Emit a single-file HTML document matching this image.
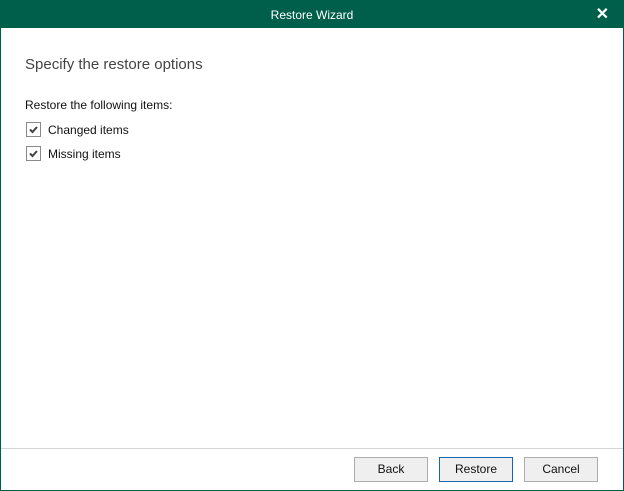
<html><head><style>
body{margin:0;width:624px;height:491px;overflow:hidden;font-family:"Liberation Sans",sans-serif;}
.win{position:absolute;left:0;top:0;width:622px;height:489px;border:1px solid #005f4b;background:#fff}
.tb{position:absolute;left:0;top:0;width:622px;height:27px;background:#005f4b;color:#fff;font-size:12px;text-align:center;line-height:28px}
.x{position:absolute;right:14px;top:0;font-size:16px;font-weight:bold}
.h{position:absolute;left:24px;top:55px;font-size:15px;color:#444}
.t{position:absolute;font-size:12px;color:#111}
.cb{position:absolute;left:25px;width:13px;height:13px;border:1px solid #8a8a8a;background:#fff}
.cb svg{position:absolute;left:1px;top:1px}
.sep{position:absolute;left:0;top:447px;width:622px;height:1px;background:#d4d4d4}
.b{position:absolute;top:456px;width:72px;height:23px;border:1px solid #adadad;background:#efefef;font-size:12px;text-align:center;line-height:23px;color:#111}
</style></head><body><div class="win">
<div class="tb">Restore Wizard<span class="x">✕</span></div>
<div class="h">Specify the restore options</div>
<div class="t" style="left:24px;top:97px">Restore the following items:</div>
<div class="cb" style="top:121px"><svg width="11" height="11"><path d="M2 5.5 L4.5 8 L9 3" stroke="#444" stroke-width="2" fill="none"/></svg></div>
<div class="t" style="left:47px;top:122px">Changed items</div>
<div class="cb" style="top:145px"><svg width="11" height="11"><path d="M2 5.5 L4.5 8 L9 3" stroke="#444" stroke-width="2" fill="none"/></svg></div>
<div class="t" style="left:47px;top:146px">Missing items</div>
<div class="sep"></div>
<div class="b" style="left:353px">Back</div>
<div class="b" style="left:438px;border-color:#1b64a8">Restore</div>
<div class="b" style="left:523px">Cancel</div>
</div></body></html>
